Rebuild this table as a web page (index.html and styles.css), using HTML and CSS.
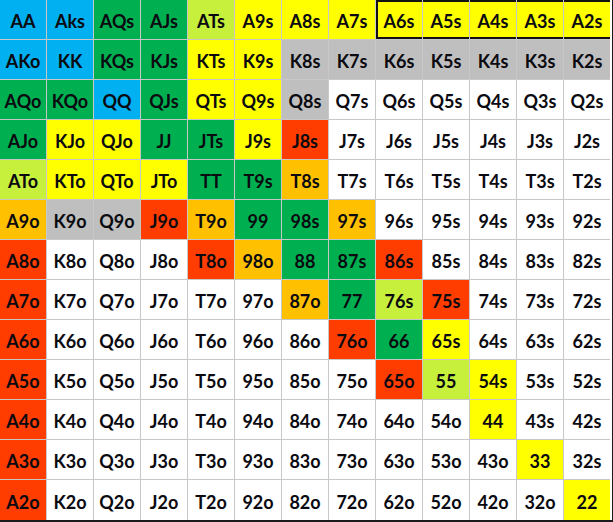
FILE: index.html
```html
<!DOCTYPE html>
<html>
<head>
<meta charset="utf-8">
<link rel="stylesheet" href="styles.css">
</head>
<body>
<div class="grid">
<div class="c b">AA</div><div class="c b">Aks</div><div class="c g">AQs</div><div class="c g">AJs</div><div class="c l">ATs</div><div class="c y">A9s</div><div class="c y">A8s</div><div class="c y">A7s</div><div class="c y bx bx-first">A6s</div><div class="c y bx">A5s</div><div class="c y bx">A4s</div><div class="c y bx">A3s</div><div class="c y bx">A2s</div>
<div class="c b">AKo</div><div class="c b">KK</div><div class="c g">KQs</div><div class="c g">KJs</div><div class="c y">KTs</div><div class="c y">K9s</div><div class="c s">K8s</div><div class="c s">K7s</div><div class="c s">K6s</div><div class="c s">K5s</div><div class="c s">K4s</div><div class="c s">K3s</div><div class="c s">K2s</div>
<div class="c g">AQo</div><div class="c g">KQo</div><div class="c b">QQ</div><div class="c g">QJs</div><div class="c y">QTs</div><div class="c y">Q9s</div><div class="c s">Q8s</div><div class="c w">Q7s</div><div class="c w">Q6s</div><div class="c w">Q5s</div><div class="c w">Q4s</div><div class="c w">Q3s</div><div class="c w">Q2s</div>
<div class="c g">AJo</div><div class="c y">KJo</div><div class="c y">QJo</div><div class="c g">JJ</div><div class="c g">JTs</div><div class="c y">J9s</div><div class="c r">J8s</div><div class="c w">J7s</div><div class="c w">J6s</div><div class="c w">J5s</div><div class="c w">J4s</div><div class="c w">J3s</div><div class="c w">J2s</div>
<div class="c l">ATo</div><div class="c y">KTo</div><div class="c y">QTo</div><div class="c y">JTo</div><div class="c g">TT</div><div class="c g">T9s</div><div class="c o">T8s</div><div class="c w">T7s</div><div class="c w">T6s</div><div class="c w">T5s</div><div class="c w">T4s</div><div class="c w">T3s</div><div class="c w">T2s</div>
<div class="c o">A9o</div><div class="c s">K9o</div><div class="c s">Q9o</div><div class="c r">J9o</div><div class="c o">T9o</div><div class="c g">99</div><div class="c g">98s</div><div class="c o">97s</div><div class="c w">96s</div><div class="c w">95s</div><div class="c w">94s</div><div class="c w">93s</div><div class="c w">92s</div>
<div class="c r">A8o</div><div class="c w">K8o</div><div class="c w">Q8o</div><div class="c w">J8o</div><div class="c r">T8o</div><div class="c o">98o</div><div class="c g">88</div><div class="c g">87s</div><div class="c r">86s</div><div class="c w">85s</div><div class="c w">84s</div><div class="c w">83s</div><div class="c w">82s</div>
<div class="c r">A7o</div><div class="c w">K7o</div><div class="c w">Q7o</div><div class="c w">J7o</div><div class="c w">T7o</div><div class="c w">97o</div><div class="c o">87o</div><div class="c g">77</div><div class="c l">76s</div><div class="c r">75s</div><div class="c w">74s</div><div class="c w">73s</div><div class="c w">72s</div>
<div class="c r">A6o</div><div class="c w">K6o</div><div class="c w">Q6o</div><div class="c w">J6o</div><div class="c w">T6o</div><div class="c w">96o</div><div class="c w">86o</div><div class="c r">76o</div><div class="c g">66</div><div class="c y">65s</div><div class="c w">64s</div><div class="c w">63s</div><div class="c w">62s</div>
<div class="c r">A5o</div><div class="c w">K5o</div><div class="c w">Q5o</div><div class="c w">J5o</div><div class="c w">T5o</div><div class="c w">95o</div><div class="c w">85o</div><div class="c w">75o</div><div class="c r">65o</div><div class="c l">55</div><div class="c y">54s</div><div class="c w">53s</div><div class="c w">52s</div>
<div class="c r">A4o</div><div class="c w">K4o</div><div class="c w">Q4o</div><div class="c w">J4o</div><div class="c w">T4o</div><div class="c w">94o</div><div class="c w">84o</div><div class="c w">74o</div><div class="c w">64o</div><div class="c w">54o</div><div class="c y">44</div><div class="c w">43s</div><div class="c w">42s</div>
<div class="c r">A3o</div><div class="c w">K3o</div><div class="c w">Q3o</div><div class="c w">J3o</div><div class="c w">T3o</div><div class="c w">93o</div><div class="c w">83o</div><div class="c w">73o</div><div class="c w">63o</div><div class="c w">53o</div><div class="c w">43o</div><div class="c y">33</div><div class="c w">32s</div>
<div class="c r">A2o</div><div class="c w">K2o</div><div class="c w">Q2o</div><div class="c w">J2o</div><div class="c w">T2o</div><div class="c w">92o</div><div class="c w">82o</div><div class="c w">72o</div><div class="c w">62o</div><div class="c w">52o</div><div class="c w">42o</div><div class="c w">32o</div><div class="c y">22</div>
</div>
</body>
</html>
```
FILE: styles.css
```css
html, body {
  margin: 0;
  padding: 0;
  background: #ffffff;
}
.grid {
  display: grid;
  grid-template-columns: repeat(12, 47px) 46px;
  grid-template-rows: repeat(13, 40px);
  width: 612px;
  border-right: 2px solid #1a1a1a;
  border-bottom: 2px solid #1a1a1a;
  box-sizing: content-box;
  font-family: Lato, "Liberation Sans", Arial, sans-serif;
  font-weight: 700;
  font-size: 18px;
  color: #0a0a10;
}
.c {
  box-sizing: border-box;
  border-right: 1px solid #c8c8c8;
  border-bottom: 1px solid #c8c8c8;
  display: flex;
  align-items: center;
  justify-content: center;
  padding-top: 3px;
}
.c:nth-child(13n) {
  border-right: none;
}
.c:nth-child(n+157) {
  border-bottom: none;
}
.bx {
  box-shadow: inset 0 2px 0 #111111, inset 0 -2px 0 #111111;
}
.bx-first {
  box-shadow: inset 2px 0 0 #111111, inset 0 2px 0 #111111, inset 0 -2px 0 #111111;
}
.b { background: #00b0f0; }
.g { background: #00b050; }
.l { background: #c6f03c; }
.y { background: #ffff00; }
.s { background: #bfbfbf; }
.r { background: #ff3d00; }
.o { background: #ffc000; }
.w { background: #ffffff; }
```
